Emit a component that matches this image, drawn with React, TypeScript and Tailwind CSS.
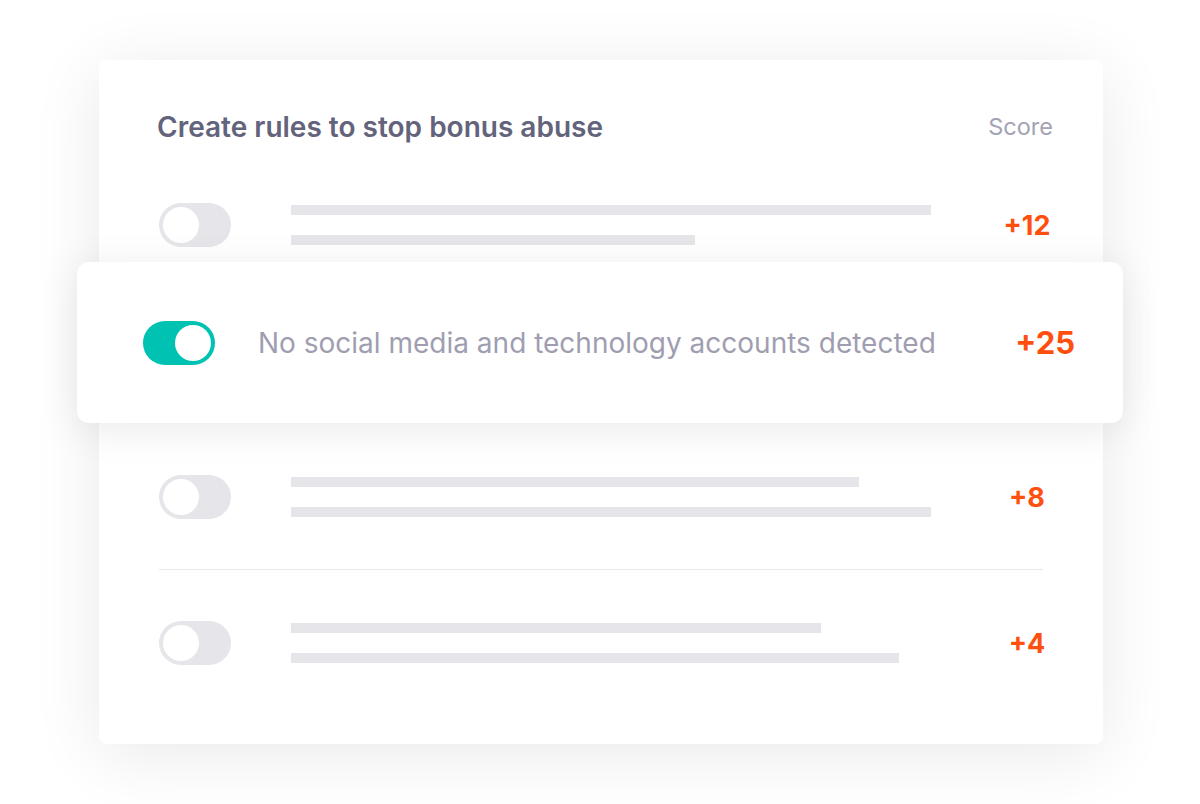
import React from 'react'

interface Rule {
  bars: [number, number]
  score: string
}

const topRule: Rule = { bars: [640, 404], score: '+12' }
const lowerRules: Rule[] = [
  { bars: [568, 640], score: '+8' },
  { bars: [530, 608], score: '+4' },
]

function Toggle({ on }: { on?: boolean }) {
  return (
    <div
      className={`flex h-[44px] w-[72px] shrink-0 items-center rounded-full px-[4px] ${
        on ? 'justify-end bg-[#00c2b2]' : 'justify-start bg-[#e5e5ea]'
      }`}
    >
      <div className="h-[36px] w-[36px] rounded-full bg-white" />
    </div>
  )
}

function RuleRow({ rule }: { rule: Rule }) {
  return (
    <div className="flex h-[44px] items-center">
      <Toggle />
      <div className="ml-[60px] flex flex-1 flex-col gap-[20px]">
        <div className="h-[10px] bg-[#e5e5ea]" style={{ width: rule.bars[0] }} />
        <div className="h-[10px] bg-[#e5e5ea]" style={{ width: rule.bars[1] }} />
      </div>
      <div className="w-[64px] text-center text-[27px] font-bold leading-none text-[#ff4f0f]">
        {rule.score}
      </div>
    </div>
  )
}

export default function App() {
  return (
    <div className="min-h-screen bg-white pl-[99px] pt-[60px] font-['Inter',sans-serif]">
      <div className="flex h-[684px] w-[1004px] flex-col rounded-[8px] bg-white pl-[60px] pr-[44px] pt-[51px] shadow-[0_10px_70px_rgba(0,0,0,0.09)]">
        {/* header */}
        <div className="flex h-[32px] items-center justify-between">
          <h1 className="-ml-[2px] text-[28px] font-semibold leading-[32px] text-[#63637c]">
            Create rules to stop bonus abuse
          </h1>
          <span className="mr-[6px] text-[23.5px] leading-[32px] text-[#a3a3b4]">Score</span>
        </div>

        <div className="mt-[60px]">
          <RuleRow rule={topRule} />
        </div>

        {/* highlighted rule */}
        <div className="relative -ml-[82px] -mr-[64px] mt-[15px] flex h-[161px] items-center rounded-[12px] bg-white pl-[66px] pr-[48px] shadow-[0_6px_40px_rgba(0,0,0,0.09)]">
          <Toggle on />
          <span className="ml-[43px] flex-1 text-[28px] leading-none text-[#9f9eb1]">
            No social media and technology accounts detected
          </span>
          <span className="text-[31px] font-bold leading-none text-[#ff4f0f]">+25</span>
        </div>

        <div className="mt-[52px]">
          <RuleRow rule={lowerRules[0]} />
        </div>

        <div className="mr-[16px] mt-[50px] h-px bg-[#e9e9ec]" />

        <div className="mt-[51px]">
          <RuleRow rule={lowerRules[1]} />
        </div>
      </div>
    </div>
  )
}
